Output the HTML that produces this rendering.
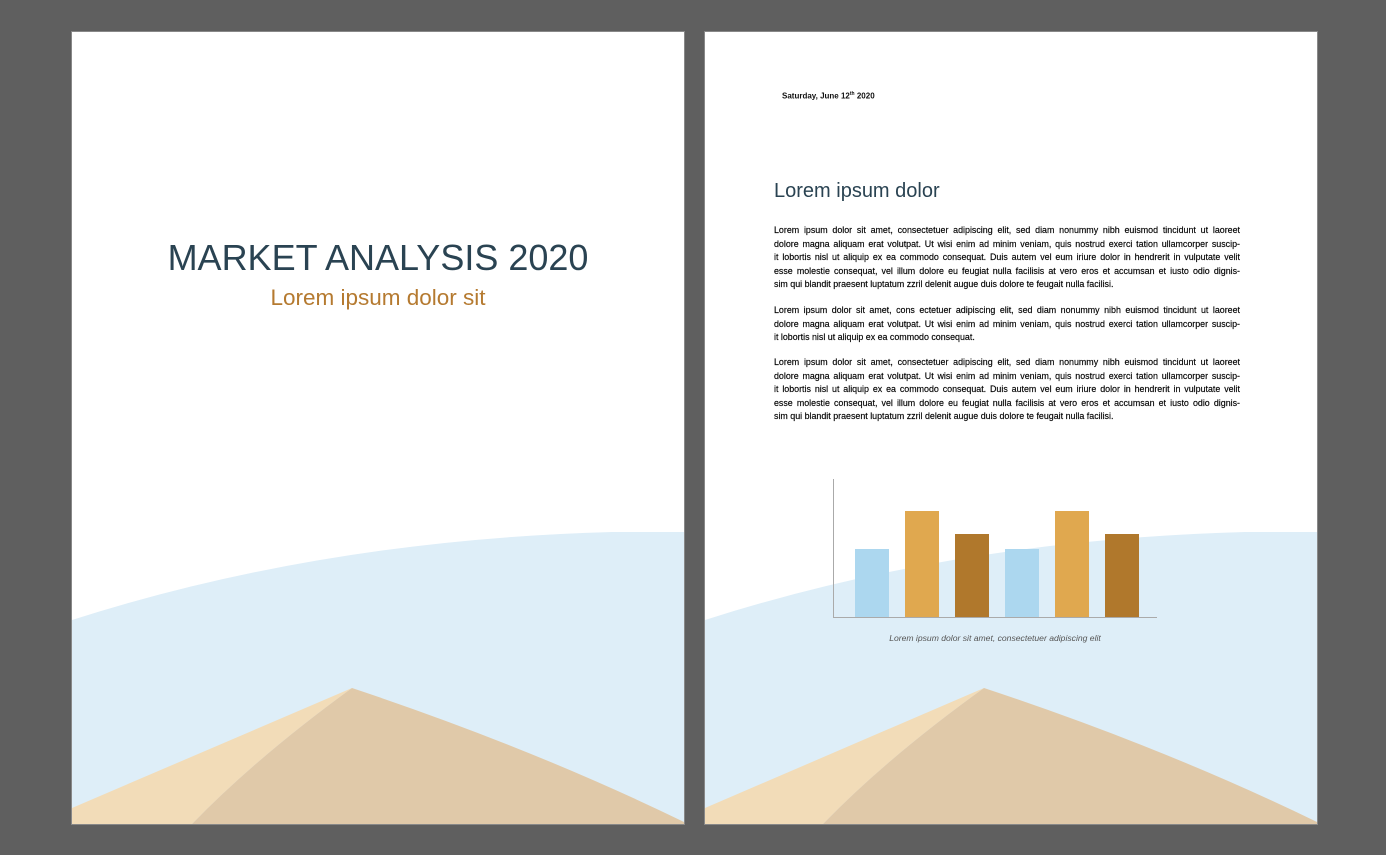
<!DOCTYPE html>
<html><head><meta charset="utf-8"><style>
body{margin:0;width:1386px;height:855px;background:#5f5f5f;position:relative;overflow:hidden;font-family:"Liberation Sans",sans-serif}
.page{position:absolute;top:32px;width:612px;height:792px;background:#fff;overflow:hidden;box-shadow:0 0 0 1px #888}
.page svg.bg{position:absolute;left:0;top:0}
.t{position:absolute;white-space:nowrap}
.p{position:absolute;left:69px;width:466px;font-size:8.9px;line-height:13.6px;color:#000;-webkit-text-stroke:0.15px #000}
.p div{text-align:justify;text-align-last:justify;height:13.6px;overflow:hidden;white-space:nowrap}
.p div.l{text-align-last:left}
</style></head><body>
<div class="page" style="left:72px">
<svg class="bg" width="612" height="792">
<path d="M0,588 Q250,508 540,500 L612,500 L612,792 L0,792Z" fill="#deeef8"/>
<path d="M0,776 L280,656 Q185,725 120,792 L0,792Z" fill="#f2dcb8"/>
<path d="M280,656 Q185,725 120,792 L612,792 L612,790 Q460,716 280,656Z" fill="#e0c9a9"/>
</svg>
<div class="t" style="left:0;width:612px;text-align:center;top:205px;font-size:36px;color:#2a4352">MARKET ANALYSIS 2020</div>
<div class="t" style="left:0;width:612px;text-align:center;top:253px;font-size:22.5px;color:#b57a30">Lorem ipsum dolor sit</div>
</div>
<div class="page" style="left:705px">
<svg class="bg" width="612" height="792">
<path d="M0,588 Q250,508 540,500 L612,500 L612,792 L0,792Z" fill="#deeef8"/>
<path d="M0,776 L279,656 Q183,725 118,792 L0,792Z" fill="#f2dcb8"/>
<path d="M279,656 Q183,725 118,792 L612,792 L612,790 Q460,716 279,656Z" fill="#e0c9a9"/>
<line x1="128.5" y1="447" x2="128.5" y2="585" stroke="#aaa" stroke-width="1"/>
<line x1="128" y1="585.5" x2="452" y2="585.5" stroke="#aaa" stroke-width="1"/>
<rect x="150" y="517" width="34" height="68" fill="#acd7ef"/>
<rect x="200" y="479" width="34" height="106" fill="#e0a84f"/>
<rect x="250" y="502" width="34" height="83" fill="#b0782c"/>
<rect x="300" y="517" width="34" height="68" fill="#acd7ef"/>
<rect x="350" y="479" width="34" height="106" fill="#e0a84f"/>
<rect x="400" y="502" width="34" height="83" fill="#b0782c"/>
</svg>
<div class="t" style="left:77px;top:59px;font-size:8px;font-weight:bold;color:#111">Saturday, June 12<sup style="font-size:5px">th</sup> 2020</div>
<div class="t" style="left:69px;top:148px;font-size:20px;color:#2a4352">Lorem ipsum dolor</div>
<div class="p" style="top:192px">
<div>Lorem ipsum dolor sit amet, consectetuer adipiscing elit, sed diam nonummy nibh euismod tincidunt ut laoreet</div>
<div>dolore magna aliquam erat volutpat. Ut wisi enim ad minim veniam, quis nostrud exerci tation ullamcorper suscip-</div>
<div>it lobortis nisl ut aliquip ex ea commodo consequat. Duis autem vel eum iriure dolor in hendrerit in vulputate velit</div>
<div>esse molestie consequat, vel illum dolore eu feugiat nulla facilisis at vero eros et accumsan et iusto odio dignis-</div>
<div class="l">sim qui blandit praesent luptatum zzril delenit augue duis dolore te feugait nulla facilisi.</div>
</div>
<div class="p" style="top:272px">
<div>Lorem ipsum dolor sit amet, cons ectetuer adipiscing elit, sed diam nonummy nibh euismod tincidunt ut laoreet</div>
<div>dolore magna aliquam erat volutpat. Ut wisi enim ad minim veniam, quis nostrud exerci tation ullamcorper suscip-</div>
<div class="l">it lobortis nisl ut aliquip ex ea commodo consequat.</div>
</div>
<div class="p" style="top:324px">
<div>Lorem ipsum dolor sit amet, consectetuer adipiscing elit, sed diam nonummy nibh euismod tincidunt ut laoreet</div>
<div>dolore magna aliquam erat volutpat. Ut wisi enim ad minim veniam, quis nostrud exerci tation ullamcorper suscip-</div>
<div>it lobortis nisl ut aliquip ex ea commodo consequat. Duis autem vel eum iriure dolor in hendrerit in vulputate velit</div>
<div>esse molestie consequat, vel illum dolore eu feugiat nulla facilisis at vero eros et accumsan et iusto odio dignis-</div>
<div class="l">sim qui blandit praesent luptatum zzril delenit augue duis dolore te feugait nulla facilisi.</div>
</div>
<div class="t" style="left:128px;width:324px;text-align:center;top:601px;font-size:8.6px;font-style:italic;color:#555">Lorem ipsum dolor sit amet, consectetuer adipiscing elit</div>
</div>
</body></html>
